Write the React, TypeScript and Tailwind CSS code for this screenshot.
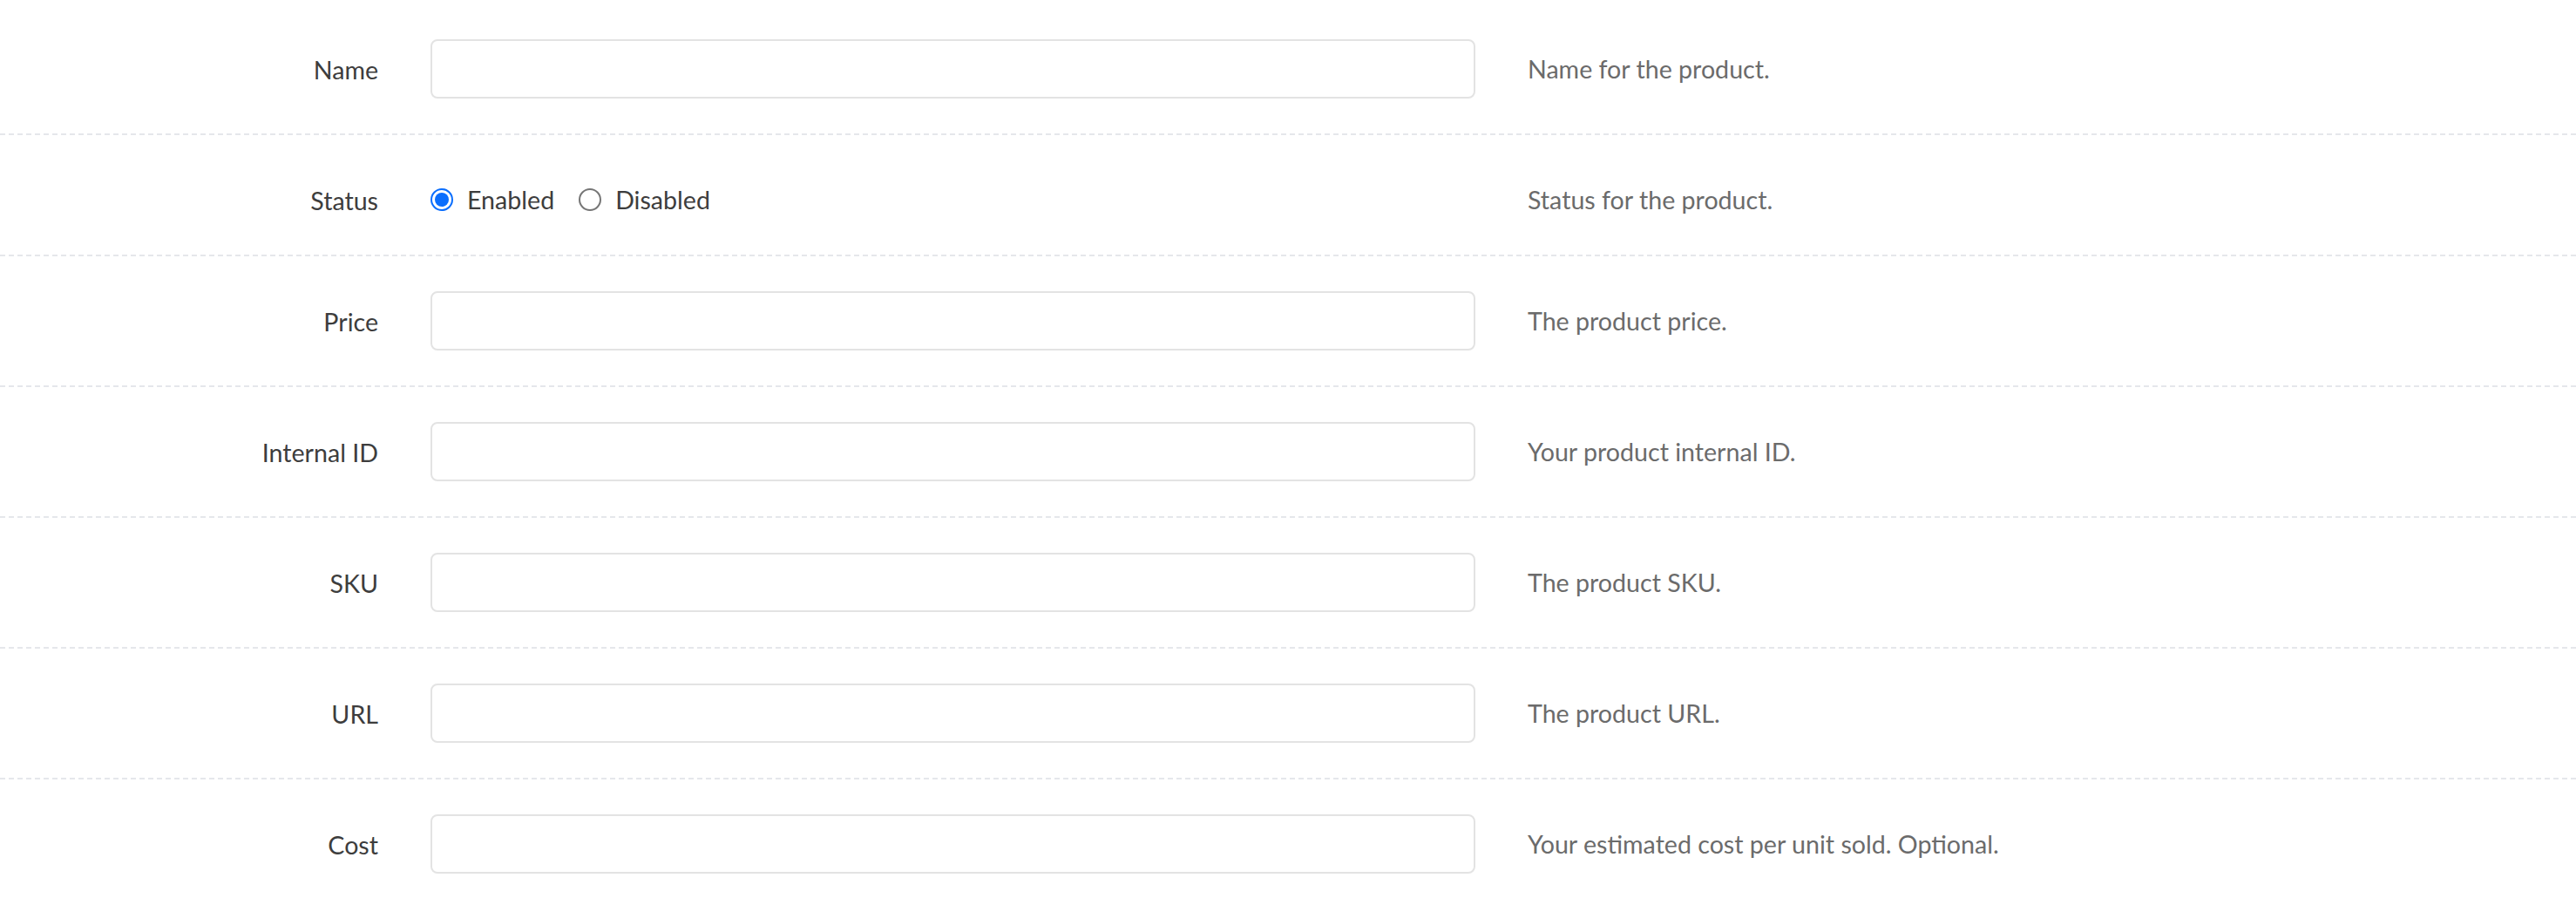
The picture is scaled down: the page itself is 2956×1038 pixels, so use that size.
import React from 'react';

// Product form: label / field / help text rows split by dashed lines

const fields = [
  { label: 'Name', help: 'Name for the product.' },
  { label: 'Status', help: 'Status for the product.', radio: true },
  { label: 'Price', help: 'The product price.' },
  { label: 'Internal ID', help: 'Your product internal ID.' },
  { label: 'SKU', help: 'The product SKU.' },
  { label: 'URL', help: 'The product URL.' },
  { label: 'Cost', help: 'Your estimated cost per unit sold. Optional.' },
];

const Radio: React.FC<{ checked?: boolean; label: string }> = ({ checked, label }) => (
  <label className="flex items-center">
    {checked ? (
      <span className="flex h-[26px] w-[26px] items-center justify-center rounded-full border-2 border-[#0b6efd] bg-white">
        <span className="h-[16px] w-[16px] rounded-full bg-[#0b6efd]" />
      </span>
    ) : (
      <span className="h-[26px] w-[26px] rounded-full border-2 border-[#767676] bg-white" />
    )}
    <span className="ml-[16px] text-[#3d3d3d]">{label}</span>
  </label>
);

export default function App() {
  return (
    <div
      className="min-h-screen bg-white pt-[5px] text-[28.6px] leading-[42px]"
      style={{ fontFamily: "Lato, 'Open Sans', sans-serif" }}
    >
      {fields.map((f) => (
        <div
          key={f.label}
          className={`flex items-center border-b-2 border-dashed border-[#e5e7eb] ${
            f.radio ? 'pt-[45px] pb-[35px]' : 'py-[40px]'
          }`}
        >
          <div className="w-[464px] pr-[30px] pt-[2px] text-right text-[#3d3d3d]">{f.label}</div>
          <div className="w-[1259px] px-[30px]">
            {f.radio ? (
              <div className="flex h-[57px] items-center gap-[28px]">
                <Radio checked label="Enabled" />
                <Radio label="Disabled" />
              </div>
            ) : (
              <input
                type="text"
                className="block h-[68px] w-full rounded-[8px] border-2 border-[#e3e3e3] bg-white px-[20px] outline-none"
              />
            )}
          </div>
          <div className="pl-[30px] text-[#6b6b6b]">{f.help}</div>
        </div>
      ))}
    </div>
  );
}
